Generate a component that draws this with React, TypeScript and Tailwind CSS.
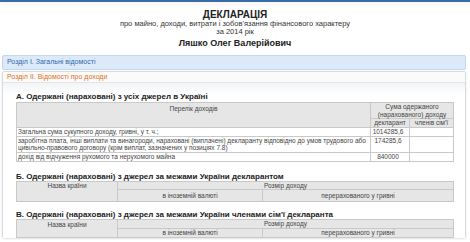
const font = { fontFamily: '"Liberation Sans", Arial, sans-serif' };

type CellProps = {
  children?: React.ReactNode;
  className?: string;
  colSpan?: number;
  rowSpan?: number;
};

function Cell({ children, className = "", colSpan, rowSpan }: CellProps) {
  return (
    <td colSpan={colSpan} rowSpan={rowSpan} className={`border border-[#c9c9c9] px-[1px] py-0 ${className}`}>
      {children}
    </td>
  );
}

function ForeignTable({ tall }: { tall?: boolean }) {
  return (
    <table className="w-[437px] border-collapse table-fixed text-[6.5px] leading-[7.5px] text-[#444] bg-[#e6e6e6]">
      <colgroup>
        <col className="w-[101px]" />
        <col className="w-[145px]" />
        <col className="w-[191px]" />
      </colgroup>
      <tbody>
        <tr className="h-[8.5px]">
          <Cell rowSpan={2} className="align-top text-center pt-[0.5px]">Назва країни</Cell>
          <Cell colSpan={2} className="text-center">Розмір доходу</Cell>
        </tr>
        <tr className={tall ? "h-[12px]" : "h-[9px]"}>
          <Cell className="text-center">в іноземній валюті</Cell>
          <Cell className="text-center">перерахованого у гривні</Cell>
        </tr>
      </tbody>
    </table>
  );
}

export default function App() {
  return (
    <div className="w-[470px] h-[242px] bg-white overflow-hidden text-[#222]" style={font}>
      <div className="h-[2px] bg-[#3a6ca8] shadow-[0_2px_4px_rgba(0,0,0,0.08)]" />

      <div className="text-center">
        <div className="mt-[7px] text-[10px] leading-[11px] font-bold text-[#222]">ДЕКЛАРАЦІЯ</div>
        <div className="text-[7.5px] leading-[7.5px] text-[#333]">
          про майно, доходи, витрати і зобов'язання фінансового характеру
        </div>
        <div className="text-[7.5px] leading-[7.5px] text-[#333]">за 2014 рік</div>
        <div className="mt-[3px] text-[9px] leading-[10px] font-bold text-[#222]">Ляшко Олег Валерійович</div>
      </div>

      <div className="ml-[2px] mr-[4px] mt-[7px] h-[15px] flex items-center px-[4px] bg-[#dce9f8] border border-[#c3d7ef] rounded-[2px] text-[7px] text-[#2f6ab0]">
        Розділ І. Загальні відомості
      </div>

      <div className="ml-[2px] mr-[4px] mt-[1px] h-[167px] border border-[#d5dce4] rounded-[2px] shadow-[0_1px_2px_rgba(0,0,0,0.12)]">
        <div className="h-[11px] flex items-center px-[4px] bg-[#fbfbfb] border-b border-[#e2e6ea] text-[7px] text-[#e0701c]">
          Розділ II. Відомості про доходи
        </div>
        <div className="bg-gradient-to-b from-[#f2f4f6] to-white to-[12px] px-[13px] pt-[9px]">
          <div className="text-[8px] leading-[9px] font-bold">А. Одержані (нараховані) з усіх джерел в Україні</div>
          <table className="mt-[1px] w-[437px] border-collapse table-fixed text-[6.5px] leading-[7.5px] text-[#444]">
            <colgroup>
              <col className="w-[354px]" />
              <col className="w-[39px]" />
              <col className="w-[44px]" />
            </colgroup>
            <tbody>
              <tr className="bg-[#e6e6e6] h-[15px]">
                <Cell rowSpan={2} className="align-top text-center pt-[2px]">Перелік доходів</Cell>
                <Cell colSpan={2} className="align-top text-center">
                  Сума одержаного
                  <br />
                  (нарахованого) доходу
                </Cell>
              </tr>
              <tr className="bg-[#e6e6e6] h-[9px]">
                <Cell className="text-center">декларант</Cell>
                <Cell className="text-center">членів сім'ї</Cell>
              </tr>
              <tr className="h-[8.5px]">
                <Cell>Загальна сума сукупного доходу, гривні, у т. ч.;</Cell>
                <Cell className="text-center pr-[5px]">1014285,6</Cell>
                <Cell />
              </tr>
              <tr>
                <Cell>
                  заробітна плата, інші виплати та винагороди, нараховані (виплачені) декларанту відповідно до умов трудового або
                  цивільно-правового договору (крім виплат, зазначених у позиціях 7.8)
                </Cell>
                <Cell className="text-center align-top pr-[5px]">174285,6</Cell>
                <Cell />
              </tr>
              <tr className="h-[9px]">
                <Cell>дохід від відчуження рухомого та нерухомого майна</Cell>
                <Cell className="text-center pr-[5px]">840000</Cell>
                <Cell />
              </tr>
            </tbody>
          </table>

          <div className="mt-[10px] text-[8px] leading-[9px] font-bold">
            Б. Одержані (нараховані) з джерел за межами України декларантом
          </div>
          <ForeignTable tall />

          <div className="mt-[8px] text-[8px] leading-[9px] font-bold">
            В. Одержані (нараховані) з джерел за межами України членами сім'ї декларанта
          </div>
          <ForeignTable />
        </div>
      </div>
    </div>
  );
}
